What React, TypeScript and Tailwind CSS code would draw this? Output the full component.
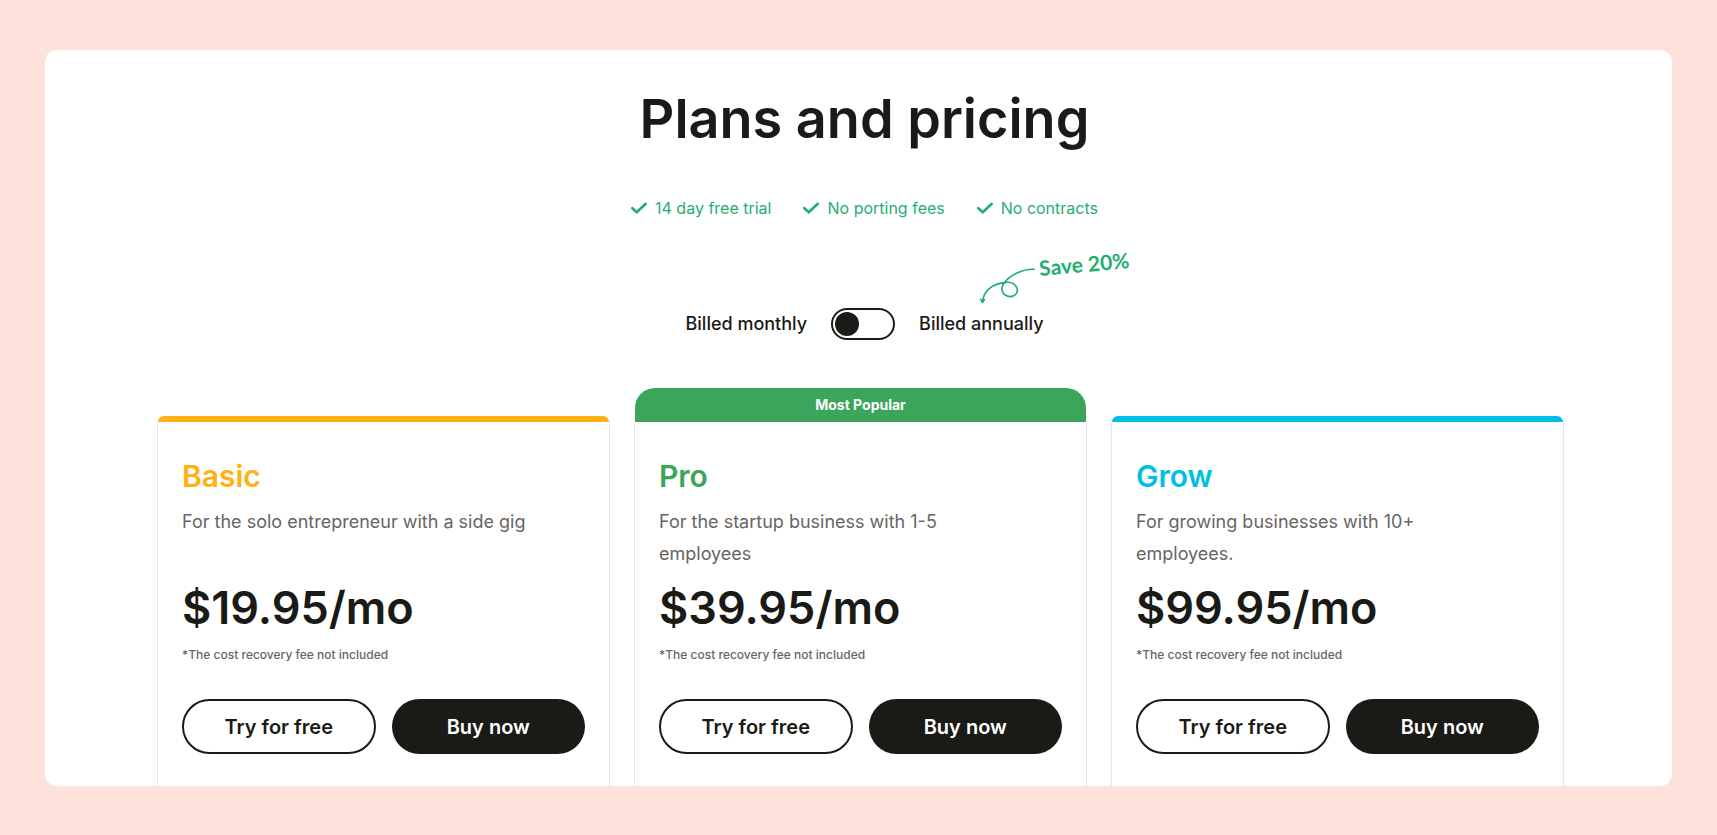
import React from "react";

type Plan = {
  name: string;
  description: string;
  price: string;
  nameClass: string;
  barClass: string;
  badge?: string;
};

const perks = ["14 day free trial", "No porting fees", "No contracts"];

const plans: Plan[] = [
  {
    name: "Basic",
    description: "For the solo entrepreneur with a side gig",
    price: "$19.95/mo",
    nameClass: "text-[#ffb013]",
    barClass: "bg-[#ffb013]",
  },
  {
    name: "Pro",
    description: "For the startup business with 1-5 employees",
    price: "$39.95/mo",
    nameClass: "text-[#3ca55c]",
    barClass: "bg-[#3ca55c]",
    badge: "Most Popular",
  },
  {
    name: "Grow",
    description: "For growing businesses with 10+ employees.",
    price: "$99.95/mo",
    nameClass: "text-[#00bfe3]",
    barClass: "bg-[#00bfe3]",
  },
];

const CheckIcon = () => (
  <svg
    className="h-4 w-4"
    viewBox="0 0 16 16"
    fill="none"
    stroke="currentColor"
    strokeWidth="2.6"
    strokeLinecap="round"
    aria-hidden="true"
  >
    <path d="M1.300 8.200 5.800 12.300 14.700 3.800" />
  </svg>
);

const LoopArrow = () => (
  <svg
    className="absolute -top-[43px] left-[58px] h-[40px] w-[60px]"
    viewBox="51 75 180 120"
    fill="none"
    stroke="#1fae72"
    strokeWidth="5"
    strokeLinecap="round"
    strokeLinejoin="round"
    aria-hidden="true"
  >
    <path d="M222 88C190 86 152 104 132 129C121 143 124 168 150 170C168 170 175 154 171 145C165 129 148 125 132 128C98 132 70 152 68 185" />
    <path d="M62 178 67.500 187 73 179" />
  </svg>
);

const BillingSwitch = () => (
  <div className="mt-22 flex items-center justify-center gap-6 text-[18px] leading-8 font-medium">
    <label htmlFor="billing">Billed monthly</label>
    <input
      id="billing"
      type="checkbox"
      role="switch"
      aria-label="Bill annually"
      className="flex h-8 w-16 cursor-pointer appearance-none items-center rounded-full border-2 border-[#1a1a16] px-0.5 before:h-6 before:w-6 before:rounded-full before:bg-[#1a1a16] checked:justify-end"
    />
    <div className="relative">
      <label htmlFor="billing">Billed annually</label>
      <LoopArrow />
      <span className="absolute -top-14 left-[120px] -rotate-5 font-['Lato',sans-serif] text-[21px] leading-6 font-bold whitespace-nowrap text-[#1fae72]">
        Save 20%
      </span>
    </div>
  </div>
);

const PlanCard = ({ plan }: { plan: Plan }) => (
  <article className={plan.badge ? "flex flex-col" : "flex flex-col pt-[28px]"}>
    {plan.badge ? (
      <p
        className={`mx-px h-[34px] rounded-t-[20px] text-center text-[14px] leading-[34px] font-bold text-white ${plan.barClass}`}
      >
        {plan.badge}
      </p>
    ) : (
      <div className={`mx-px h-1.5 rounded-t-md ${plan.barClass}`} />
    )}
    <div className="flex-1 border-x border-[#e6e6eb] px-6 pt-[34px] pb-8">
      <h2 className={`text-[30px] leading-10 font-semibold ${plan.nameClass}`}>
        {plan.name}
      </h2>
      <p className="mt-2.5 min-h-16 max-w-[360px] text-[18px] leading-8 text-[#666663]">
        {plan.description}
      </p>
      <p className="mt-1.5 text-[45px] leading-[63px] font-semibold">
        {plan.price}
      </p>
      <p className="mt-1 text-[12px] leading-6 font-medium text-[#666663]">
        *The cost recovery fee not included
      </p>
      <div className="mt-8 grid grid-cols-2 gap-4 text-[20px] font-semibold">
        <button
          type="button"
          className="h-[55px] cursor-pointer rounded-full border-2 border-[#1a1a16]"
        >
          Try for free
        </button>
        <button
          type="button"
          className="h-[55px] cursor-pointer rounded-full bg-[#1a1a16] text-white"
        >
          Buy now
        </button>
      </div>
    </div>
  </article>
);

const App = () => {
  return (
    <div className="flex min-h-screen flex-col bg-[#fde2dc] px-[45px] py-[50px] font-['Inter',sans-serif] text-[#1a1a16]">
      <main className="flex flex-1 flex-col overflow-hidden rounded-xl bg-white pr-[108px] pl-28">
        <header className="pt-8 pl-2">
          <h1 className="text-center text-[54px] leading-[74px] font-semibold">
            Plans and pricing
          </h1>
          <ul className="mt-10 flex justify-center gap-8 text-[16px] leading-6 text-[#1fae72]">
            {perks.map((perk) => (
              <li key={perk} className="flex items-center gap-2">
                <CheckIcon />
                {perk}
              </li>
            ))}
          </ul>
          <BillingSwitch />
        </header>
        <section className="mt-12 grid flex-1 grid-cols-3 gap-6">
          {plans.map((plan) => (
            <PlanCard key={plan.name} plan={plan} />
          ))}
        </section>
      </main>
    </div>
  );
};

export default App;
